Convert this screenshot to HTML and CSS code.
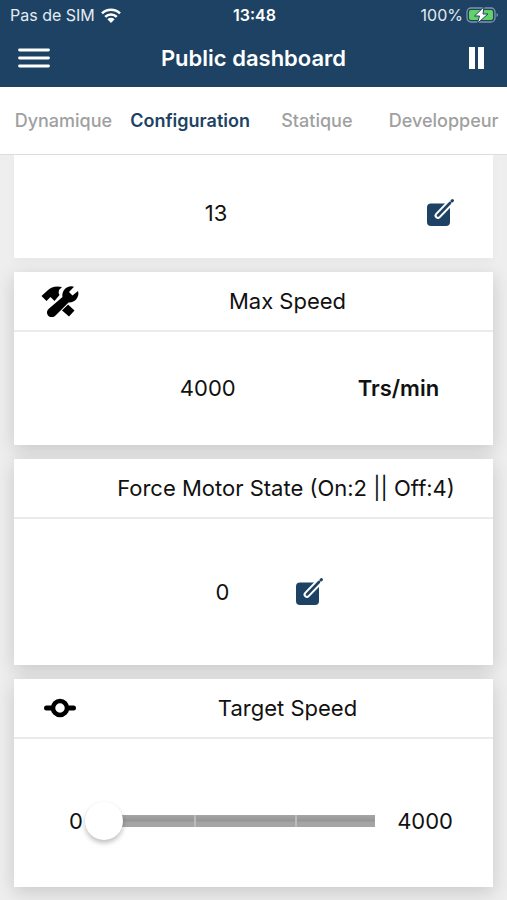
FILE: index.html
```html
<!DOCTYPE html>
<html lang="fr">
<head>
<meta charset="utf-8">
<meta name="viewport" content="width=device-width, initial-scale=1">
<title>Public dashboard</title>
<link rel="stylesheet" href="styles.css">
</head>
<body>
<header class="top">
  <div class="status">
    <div class="status-left">
      <span>Pas de SIM</span>
      <svg class="wifi" viewBox="0 0 20 15" aria-hidden="true"><g fill="none" stroke="#fff" stroke-width="2.6"><path d="M1 5.4a13 13 0 0 1 18 0"/><path d="M4.2 8.9a8.3 8.3 0 0 1 11.6 0"/></g><path d="M6.4 11.2a5.2 5.2 0 0 1 7.2 0L10 15z" fill="#fff"/></svg>
    </div>
    <time class="clock">13:48</time>
    <div class="status-right">
      <span>100%</span>
      <svg class="battery" viewBox="0 0 33 18" aria-hidden="true"><rect x="1" y="2" width="28" height="14" rx="4" fill="none" stroke="#7f95a9" stroke-width="1.3"/><rect x="3" y="4" width="24" height="10" rx="2" fill="#62d266"/><path d="M30.5 7v4c2-.8 2-3.200 0-4z" fill="#7f95a9"/><path d="M18 .8 8.500 10h5l-2.200 7.500L22 8h-5z" fill="#fff" stroke="#1d4263" stroke-width="1" stroke-linejoin="round"/></svg>
    </div>
  </div>
  <div class="bar">
    <button class="bar-button" type="button" aria-label="Menu"><svg class="menu" viewBox="0 0 32 20"><path d="M1.500 2h29M1.500 10h29M1.500 18h29" stroke="#fff" stroke-width="2.800" stroke-linecap="round"/></svg></button>
    <h1>Public dashboard</h1>
    <button class="bar-button" type="button" aria-label="Pause"><svg class="pause" viewBox="0 0 16 24"><path d="M0 1h6v22H0zM9 1h6v22H9z" fill="#fff"/></svg></button>
  </div>
</header>
<nav class="tabs">
  <a href="#dynamique">Dynamique</a>
  <a href="#configuration" class="active" aria-current="page">Configuration</a>
  <a href="#statique">Statique</a>
  <a href="#developpeur">Developpeur</a>
</nav>
<main>
  <section class="card first">
    <div class="body setting">
      <span>13</span>
      <button class="edit" type="button" aria-label="Modifier"><svg viewBox="0 0 28 28"><rect x="1" y="4.500" width="23" height="22.500" rx="4" fill="#1d4263"/><path d="M26 2 12 16.500" stroke="#fff" stroke-width="6.800" stroke-linecap="round"/><path d="M24 4 12 16.500" stroke="#1d4263" stroke-width="2.600" stroke-linecap="round"/><path d="m26 2 .4-.4" stroke="#1d4263" stroke-width="3" stroke-linecap="round"/></svg></button>
    </div>
  </section>
  <section class="card">
    <div class="head">
      <svg class="icon" viewBox="0 0 38 32" aria-hidden="true"><path d="M.5 11 6.500 5.500Q12 0 21 2L18 5q-1 3 .5 5l-5 6L9.500 12 5.500 16z"/><path d="M20.500 25 27 19.500 33.500 25.500 28 31.500z"/><path d="M33 1.700A9 9 0 0 0 21.500 12L7.500 24a4.600 4.600 0 0 0 6.500 7L27.500 17.500A9 9 0 0 0 37 6L31.500 10.500l-3.500-3.500z" stroke="#fff" stroke-width="2" paint-order="stroke"/></svg>
      <h2>Max Speed</h2>
    </div>
    <div class="body reading">
      <span>4000</span>
      <strong>Trs/min</strong>
    </div>
  </section>
  <section class="card">
    <div class="head">
      <h2 class="long">Force Motor State (On:2 || Off:4)</h2>
    </div>
    <div class="body state">
      <span>0</span>
      <button class="edit" type="button" aria-label="Modifier"><svg viewBox="0 0 28 28"><rect x="1" y="4.500" width="23" height="22.500" rx="4" fill="#1d4263"/><path d="M26 2 12 16.500" stroke="#fff" stroke-width="6.800" stroke-linecap="round"/><path d="M24 4 12 16.500" stroke="#1d4263" stroke-width="2.600" stroke-linecap="round"/><path d="m26 2 .4-.4" stroke="#1d4263" stroke-width="3" stroke-linecap="round"/></svg></button>
    </div>
  </section>
  <section class="card">
    <div class="head">
      <svg class="icon" viewBox="0 0 38 32" aria-hidden="true"><g fill="none" stroke="#000" stroke-linecap="round"><circle cx="19" cy="16" r="7" stroke-width="4.500"/><path d="M5.500 16H11M27 16h5.500" stroke-width="5"/></g></svg>
      <h2><label for="speed">Target Speed</label></h2>
    </div>
    <div class="body range">
      <span>0</span>
      <input id="speed" type="range" min="0" max="4000" value="0">
      <span class="max">4000</span>
    </div>
  </section>
</main>
</body>
</html>
```
FILE: styles.css
```css
* {
  box-sizing: border-box;
}

body {
  margin: 0;
  background: #eee;
  color: #111;
  font: 22px/28px Inter, "Liberation Sans", sans-serif;
}

button {
  display: flex;
  padding: 0;
  border: 0;
  background: none;
  cursor: pointer;
}

svg {
  display: block;
  flex: none;
}

.top {
  position: relative;
  background: #1d4263;
  color: #fff;
}

.status {
  display: grid;
  grid-template-columns: 1fr auto 1fr;
  align-items: center;
  height: 30px;
  padding: 0 8px 0 10px;
  color: #e4ebf2;
  font-size: 16px;
  line-height: 20px;
}

.status-left,
.status-right {
  display: flex;
  align-items: center;
  gap: 6px;
}

.status-right {
  justify-content: flex-end;
  gap: 3px;
}

.clock {
  color: #fff;
  font-weight: 600;
}

.wifi {
  width: 20px;
  height: 15px;
}

.battery {
  width: 33px;
  height: 18px;
}

.bar {
  display: flex;
  align-items: center;
  justify-content: space-between;
  height: 57px;
  padding: 0 22px 2px 18px;
}

.bar-button {
  width: 32px;
}

.bar-button:last-child {
  justify-content: flex-end;
}

.menu {
  width: 32px;
  height: 20px;
}

.pause {
  width: 16px;
  height: 24px;
}

h1,
h2 {
  margin: 0;
  font-size: 22px;
  line-height: 28px;
}

h1 {
  padding-left: 4px;
  font-weight: 600;
}

.tabs {
  position: relative;
  display: grid;
  grid-template-columns: repeat(4, minmax(0, 1fr));
  align-items: center;
  height: 68px;
  border-bottom: 1px solid #ddd;
  background: #fff;
  font-size: 18px;
  font-weight: 500;
}

.tabs a {
  color: #a0a0a0;
  text-align: center;
  text-decoration: none;
}

.tabs .active {
  color: #1d4263;
  font-weight: 600;
}

main {
  display: grid;
  gap: 14px;
  padding: 0 14px 13px;
}

.card {
  background: #fff;
  box-shadow: 0 5px 18px rgba(0, 0, 0, 0.16);
}

.card.first {
  box-shadow: 0 3px 8px rgba(0, 0, 0, 0.03);
}

.head {
  display: flex;
  align-items: center;
  height: 60px;
  padding-left: 27px;
  border-bottom: 2px solid #ebebeb;
}

.icon {
  width: 38px;
  height: 32px;
}

h2 {
  flex: 1;
  padding-left: 3px;
  font-weight: 400;
  text-align: center;
}

.long {
  padding-left: 38px;
}

.body {
  display: flex;
  align-items: center;
  justify-content: center;
}

.edit svg {
  width: 28px;
  height: 28px;
}

.setting {
  gap: 199px;
  height: 103px;
  padding: 12px 0 0 152px;
}

.reading {
  gap: 122px;
  height: 113px;
  padding: 0 0 2px 112px;
}

.reading strong {
  font-weight: 600;
}

.state {
  gap: 66px;
  height: 146px;
  padding-left: 32px;
}

.range {
  gap: 2px;
  height: 148px;
  padding: 16px 40px 0 55px;
}

.max {
  padding-left: 20px;
}

input[type="range"] {
  flex: 1;
  min-width: 0;
  height: 38px;
  margin: 0;
  appearance: none;
  background: none;
}

input[type="range"]::-webkit-slider-runnable-track {
  height: 12px;
  background:
    linear-gradient(#bbb, #bbb) 38% 0 / 2px 100% no-repeat,
    linear-gradient(#bbb, #bbb) 73% 0 / 2px 100% no-repeat,
    linear-gradient(#a6a6a6, #959595 50%, #a5a5a5 60%) 19px 0 no-repeat;
}

input[type="range"]::-webkit-slider-thumb {
  width: 38px;
  height: 38px;
  margin-top: -13px;
  border-radius: 50%;
  appearance: none;
  background: #fff;
  box-shadow: 0 3px 5px rgba(0, 0, 0, 0.25);
}
```
